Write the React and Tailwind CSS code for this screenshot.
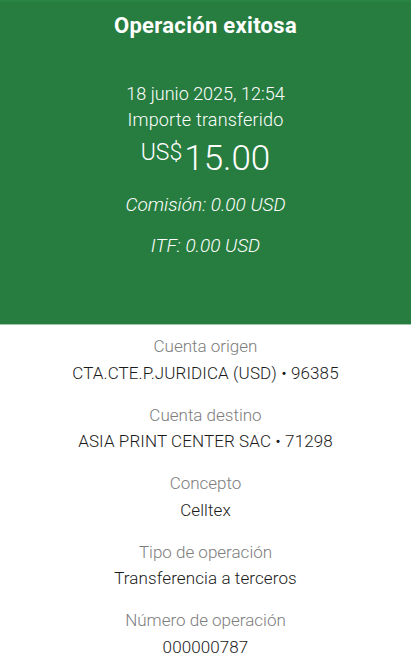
import React from "react";

const rows = [
  ["Cuenta origen", "CTA.CTE.P.JURIDICA (USD) • 96385"],
  ["Cuenta destino", "ASIA PRINT CENTER SAC • 71298"],
  ["Concepto", "Celltex"],
  ["Tipo de operación", "Transferencia a terceros"],
  ["Número de operación", "000000787"],
];

export default function App() {
  return (
    <div className="w-[411px] h-[668px] bg-white flex flex-col font-['Roboto',sans-serif] overflow-hidden">
      <div className="h-[324px] shrink-0 bg-[#277d3f] flex flex-col items-center text-white border-t-2 border-[#2a8544]">
        <div className="mt-[10px] text-[22px] leading-[28px] font-bold tracking-[0.3px]">Operación exitosa</div>
        <div className="mt-[41px] text-[18px] leading-[26px] font-light">18 junio 2025, 12:54</div>
        <div className="text-[18px] leading-[26px] font-light tracking-[0.2px]">Importe transferido</div>
        <div className="mt-[6px] flex items-start">
          <span className="text-[23px] leading-[24px] mt-[2px] mr-[2px] font-light">US$</span>
          <span className="text-[35px] leading-[40px] font-light">15.00</span>
        </div>
        <div className="mt-[14px] text-[19px] leading-[24px] italic font-light">Comisión: 0.00 USD</div>
        <div className="mt-[17px] text-[19px] leading-[24px] italic font-light">ITF: 0.00 USD</div>
      </div>
      <div className="h-[1px] shrink-0 bg-[#9cc6a6]" />
      <div className="flex-1 flex flex-col items-center pt-[9px] border-b border-[#c8c8c8]">
        {rows.map(([label, value]) => (
          <div key={label} className="flex flex-col items-center mb-[17px]">
            <div className="text-[17px] leading-[25.5px] text-[#7d7d7d] font-light">{label}</div>
            <div className="text-[17px] leading-[26px] text-[#1a1a1a] font-light tracking-[0.1px]">{value}</div>
          </div>
        ))}
      </div>
    </div>
  );
}
